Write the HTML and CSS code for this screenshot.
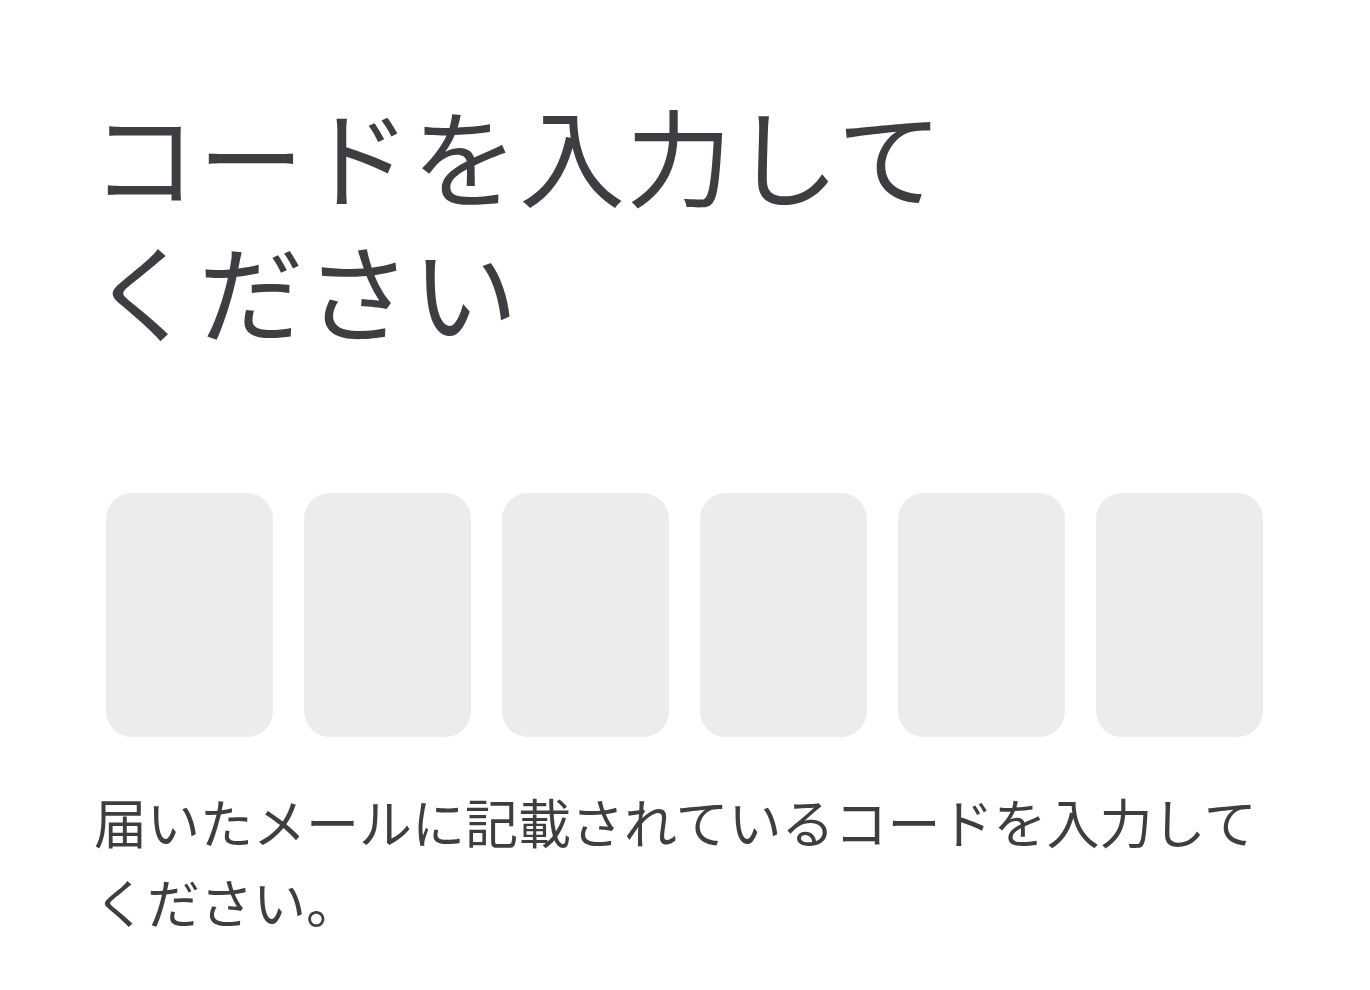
FILE: index.html
```html
<!DOCTYPE html>
<html lang="ja">
<head>
<meta charset="utf-8">
<link rel="stylesheet" href="styles.css">
</head>
<body>
<main class="page">
  <h1 class="title">コードを入力してください</h1>
  <div class="code-row">
    <div class="code-box"></div>
    <div class="code-box"></div>
    <div class="code-box"></div>
    <div class="code-box"></div>
    <div class="code-box"></div>
    <div class="code-box"></div>
  </div>
  <p class="desc">届いたメールに記載されているコードを入力してください。</p>
</main>
</body>
</html>
```
FILE: styles.css
```css
html, body {
  margin: 0;
  padding: 0;
  background: #ffffff;
}
.page {
  width: 1370px;
  height: 990px;
  box-sizing: border-box;
  padding: 86px 98px 0 94px;
  font-family: "Noto Sans CJK JP", "Noto Sans", sans-serif;
  color: #3d3e41;
}
.title {
  margin: 0 0 0 -3px;
  font-size: 106px;
  font-weight: 400;
  line-height: 135px;
  letter-spacing: 1px;
  width: 900px;
}
.code-row {
  display: flex;
  gap: 31px;
  margin-top: 137px;
  padding-left: 12px;
}
.code-box {
  width: 167px;
  height: 244px;
  border-radius: 26px;
  background: #ebecee;
}
.desc {
  margin: 44px 0 0 0;
  font-size: 53px;
  line-height: 80px;
  font-weight: 400;
}
```
